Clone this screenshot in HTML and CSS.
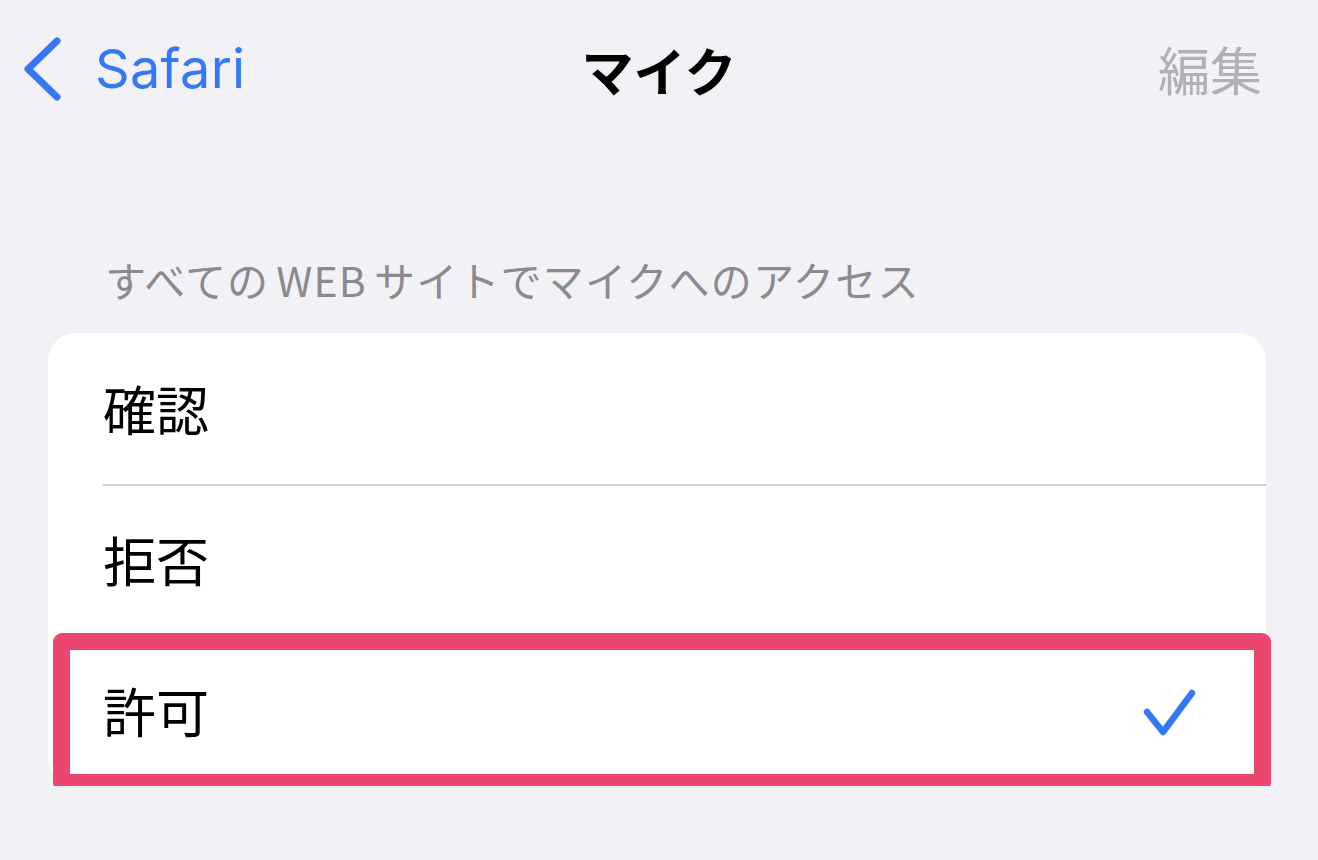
FILE: index.html
```html
<!DOCTYPE html>
<html lang="ja">
<head>
<meta charset="utf-8">
<link rel="stylesheet" href="styles.css">
</head>
<body>
<header class="nav">
  <a class="back">
    <svg class="chev" width="40" height="66" viewBox="0 0 40 66"><polyline points="33,4 4,32 33,60" fill="none" stroke="#3478f6" stroke-width="7" stroke-linecap="round" stroke-linejoin="round"/></svg>
    <span class="back-label">Safari</span>
  </a>
  <h1 class="title">マイク</h1>
  <span class="edit">編集</span>
</header>
<main class="content">
  <div class="section-head">すべての<span class="latin">WEB</span>サイトでマイクへのアクセス</div>
  <div class="card">
    <div class="row"><span class="label">確認</span></div>
    <div class="row"><span class="label">拒否</span></div>
    <div class="row selected">
      <span class="label">許可</span>
      <svg class="check" width="56" height="52" viewBox="0 0 56 52"><polyline points="5,25 21,45 50,6" fill="none" stroke="#3478f6" stroke-width="6.5" stroke-linecap="round" stroke-linejoin="round"/></svg>
      <div class="highlight"></div>
    </div>
  </div>
</main>
</body>
</html>
```
FILE: styles.css
```css
html, body {
  margin: 0;
  padding: 0;
  background: #f2f1f6;
  font-family: "Noto Sans CJK JP", "Noto Sans", sans-serif;
}
.nav {
  position: relative;
  height: 138px;
  display: flex;
  align-items: center;
  justify-content: space-between;
  padding: 0 56px 0 24px;
}
.back {
  display: flex;
  align-items: center;
  gap: 31px;
  color: #3478f6;
}
.chev { display: block; margin-top: 2px; }
.back-label {
  font-family: "Inter", "Liberation Sans", sans-serif;
  font-size: 54px;
  letter-spacing: 0.3px;
  line-height: 1;
}
.title {
  position: absolute;
  left: 0;
  right: 0;
  top: 0;
  height: 138px;
  margin: 0;
  display: flex;
  align-items: center;
  justify-content: center;
  font-size: 52px;
  font-weight: 700;
  color: #000;
  pointer-events: none;
}
.edit {
  font-size: 52px;
  color: #b1b1b5;
  line-height: 1;
}
.content {
  padding: 113px 52px 0 48px;
}
.section-head {
  padding-left: 57px;
  font-size: 41px;
  letter-spacing: 1.2px;
  color: #8b8a8f;
  line-height: 56px;
  margin-bottom: 26px;
}
.latin {
  margin: 0 7px;
}
.card {
  background: #fff;
  border-radius: 28px;
}
.row {
  position: relative;
  height: 151px;
  display: flex;
  align-items: center;
  justify-content: space-between;
  padding: 0 68px 0 55px;
}
.row + .row::before {
  content: "";
  position: absolute;
  left: 55px;
  right: 0;
  top: 0;
  height: 1.5px;
  background: #cfcfd3;
}
.label {
  font-size: 53px;
  color: #000;
  line-height: 1;
}
.check { display: block; margin-top: 4px; }
.highlight {
  position: absolute;
  left: 5px;
  right: -5px;
  top: -2px;
  bottom: -5px;
  border: 17px solid #ea466e;
  border-radius: 9px;
  pointer-events: none;
}
```
